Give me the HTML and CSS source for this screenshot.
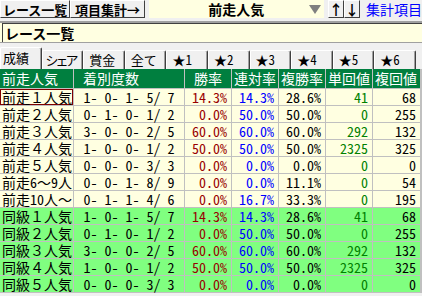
FILE: index.html
```html
<!DOCTYPE html>
<html lang="ja">
<head>
    <meta charset="UTF-8">
    <title>レース一覧</title>
    <link rel="stylesheet" href="styles.css">
</head>
<body>
    <div class="toolbar">
        <button class="btn btn-race">レース一覧</button>
        <button class="btn btn-item">項目集計→</button>
        <div class="combo">
            <span class="combo-text">前走人気</span>
            <svg class="combo-arrow" width="12" height="9" viewBox="0 0 12 9"><polygon points="0,0 12,0 6,9" fill="#808080"/></svg>
        </div>
        <button class="btn btn-arrow">↑</button>
        <button class="btn btn-arrow">↓</button>
        <span class="link">集計項目</span>
    </div>
    <div class="title-bar">
        <div class="title-box">レース一覧</div>
    </div>
    <div class="tabs">
        <div class="tab active">成績</div>
        <div class="tab narrow">シェア</div>
        <div class="tab">賞金</div>
        <div class="tab">全て</div>
        <div class="tab">★1</div>
        <div class="tab">★2</div>
        <div class="tab">★3</div>
        <div class="tab">★4</div>
        <div class="tab">★5</div>
        <div class="tab">★6</div>
    </div>
    <div class="grid">
        <div class="row head">
            <div class="cell">前走人気</div>
            <div class="cell pad">着別度数</div>
            <div class="cell pad">勝率</div>
            <div class="cell">連対率</div>
            <div class="cell">複勝率</div>
            <div class="cell">単回値</div>
            <div class="cell">複回値</div>
        </div>
        <div class="row">
            <div class="cell name selected">前走１人気</div>
            <div class="cell count">1- 0- 1- 5/ 7</div>
            <div class="cell num win">14.3%</div>
            <div class="cell num rentai">14.3%</div>
            <div class="cell num">28.6%</div>
            <div class="cell num tan">41</div>
            <div class="cell num">68</div>
        </div>
        <div class="row">
            <div class="cell name">前走２人気</div>
            <div class="cell count">0- 1- 0- 1/ 2</div>
            <div class="cell num win">0.0%</div>
            <div class="cell num rentai">50.0%</div>
            <div class="cell num">50.0%</div>
            <div class="cell num tan">0</div>
            <div class="cell num">255</div>
        </div>
        <div class="row">
            <div class="cell name">前走３人気</div>
            <div class="cell count">3- 0- 0- 2/ 5</div>
            <div class="cell num win">60.0%</div>
            <div class="cell num rentai">60.0%</div>
            <div class="cell num">60.0%</div>
            <div class="cell num tan">292</div>
            <div class="cell num">132</div>
        </div>
        <div class="row">
            <div class="cell name">前走４人気</div>
            <div class="cell count">1- 0- 0- 1/ 2</div>
            <div class="cell num win">50.0%</div>
            <div class="cell num rentai">50.0%</div>
            <div class="cell num">50.0%</div>
            <div class="cell num tan">2325</div>
            <div class="cell num">325</div>
        </div>
        <div class="row">
            <div class="cell name">前走５人気</div>
            <div class="cell count">0- 0- 0- 3/ 3</div>
            <div class="cell num win">0.0%</div>
            <div class="cell num rentai">0.0%</div>
            <div class="cell num">0.0%</div>
            <div class="cell num tan">0</div>
            <div class="cell num">0</div>
        </div>
        <div class="row">
            <div class="cell name">前走<span class="hw">6</span>～<span class="hw">9</span>人</div>
            <div class="cell count">0- 0- 1- 8/ 9</div>
            <div class="cell num win">0.0%</div>
            <div class="cell num rentai">0.0%</div>
            <div class="cell num">11.1%</div>
            <div class="cell num tan">0</div>
            <div class="cell num">54</div>
        </div>
        <div class="row">
            <div class="cell name">前走<span class="hw">10</span>人～</div>
            <div class="cell count">0- 1- 1- 4/ 6</div>
            <div class="cell num win">0.0%</div>
            <div class="cell num rentai">16.7%</div>
            <div class="cell num">33.3%</div>
            <div class="cell num tan">0</div>
            <div class="cell num">195</div>
        </div>
        <div class="row same">
            <div class="cell name">同級１人気</div>
            <div class="cell count">1- 0- 1- 5/ 7</div>
            <div class="cell num win">14.3%</div>
            <div class="cell num rentai">14.3%</div>
            <div class="cell num">28.6%</div>
            <div class="cell num tan">41</div>
            <div class="cell num">68</div>
        </div>
        <div class="row same">
            <div class="cell name">同級２人気</div>
            <div class="cell count">0- 1- 0- 1/ 2</div>
            <div class="cell num win">0.0%</div>
            <div class="cell num rentai">50.0%</div>
            <div class="cell num">50.0%</div>
            <div class="cell num tan">0</div>
            <div class="cell num">255</div>
        </div>
        <div class="row same">
            <div class="cell name">同級３人気</div>
            <div class="cell count">3- 0- 0- 2/ 5</div>
            <div class="cell num win">60.0%</div>
            <div class="cell num rentai">60.0%</div>
            <div class="cell num">60.0%</div>
            <div class="cell num tan">292</div>
            <div class="cell num">132</div>
        </div>
        <div class="row same">
            <div class="cell name">同級４人気</div>
            <div class="cell count">1- 0- 0- 1/ 2</div>
            <div class="cell num win">50.0%</div>
            <div class="cell num rentai">50.0%</div>
            <div class="cell num">50.0%</div>
            <div class="cell num tan">2325</div>
            <div class="cell num">325</div>
        </div>
        <div class="row same">
            <div class="cell name">同級５人気</div>
            <div class="cell count">0- 0- 0- 3/ 3</div>
            <div class="cell num win">0.0%</div>
            <div class="cell num rentai">0.0%</div>
            <div class="cell num">0.0%</div>
            <div class="cell num tan">0</div>
            <div class="cell num">0</div>
        </div>
    </div>
</body>
</html>
```

FILE: styles.css
```css
body {
    margin: 0;
    width: 422px;
    overflow: hidden;
    background-color: #f0f0f0;
    font-family: "Noto Sans CJK JP", sans-serif;
}
.toolbar {
    display: flex;
    height: 18px;
    overflow: hidden;
    white-space: nowrap;
}
.btn {
    box-sizing: border-box;
    height: 18px;
    margin: 0;
    padding: 0 0 0 2px;
    background-color: #f0f0f0;
    border: 1px solid;
    border-color: #ffffff #404040 #404040 #ffffff;
    font: bold 13px/15px "Noto Sans CJK JP", sans-serif;
    text-align: left;
    color: #000;
}
.btn-race {
    width: 74px;
}
.btn-item {
    width: 79px;
    padding-left: 4px;
}
.btn-arrow {
    width: 16px;
    padding: 0;
    text-align: center;
    font-size: 14px;
}
.combo {
    box-sizing: border-box;
    display: flex;
    align-items: center;
    width: 185px;
    margin: 0 4px 0 4px;
    padding: 0 3px 0 15px;
    background-color: #ffffe1;
    font-weight: bold;
    font-size: 14px;
}
.combo-text {
    flex: 1;
    text-align: center;
}
.link {
    margin-left: 6px;
    color: #0000ff;
    font-size: 14px;
    line-height: 18px;
}
.title-bar {
    margin-top: 3px;
    border-top: 2px solid #a0a0a0;
    border-bottom: 1px solid #a0a0a0;
    padding-left: 2px;
    background-color: #ffffe1;
}
.title-box {
    height: 18px;
    padding-left: 2px;
    border-top: 1px solid #404040;
    border-left: 1px solid #404040;
    font-weight: bold;
    font-size: 14px;
    line-height: 18px;
}
.tabs {
    display: flex;
    align-items: flex-end;
    height: 26px;
}
.tab {
    box-sizing: border-box;
    width: 41.6px;
    height: 19px;
    padding-left: 5px;
    border-top: 1px solid #ffffff;
    border-left: 1px solid #ffffff;
    border-right: 1px solid #404040;
    box-shadow: inset -1px 0 #a0a0a0;
    border-radius: 2px 2px 0 0;
    font-size: 13px;
    line-height: 18px;
    white-space: nowrap;
    overflow: hidden;
    font-feature-settings: "hwid";
}
.tab.narrow {
    padding-left: 3px;
    letter-spacing: -3px;
}
.tab.active {
    height: 22px;
    padding-left: 2px;
    font-size: 13px;
    line-height: 20px;
}
.grid {
    display: flex;
    flex-direction: column;
    gap: 1px;
    width: 422px;
    background-color: #c0c0c0;
    padding-bottom: 1px;
}
.row {
    display: grid;
    grid-template-columns: 73px 110px 46px 46px 46px 46px 47px;
    column-gap: 1px;
    height: 16px;
}
.cell {
    background-color: #ffffe1;
    font-size: 14px;
    line-height: 16px;
    white-space: pre;
}
.head {
    height: 19px;
}
.head .cell {
    background-color: #007f3f;
    color: #ffffff;
    line-height: 19px;
    padding-left: 2px;
}
.head .pad {
    padding-left: 9px;
}
.name {
    padding-left: 2px;
}
.hw {
    font-feature-settings: "hwid";
}
.selected {
    box-shadow: inset 0 0 0 1px #800000;
}
.count {
    text-align: center;
    font-feature-settings: "hwid";
}
.num {
    text-align: right;
    padding-right: 4px;
    font-feature-settings: "hwid";
}
.win {
    color: #990000;
}
.rentai {
    color: #0000ff;
}
.tan {
    color: #008000;
}
.same .cell {
    background-color: #80ff80;
}
```
